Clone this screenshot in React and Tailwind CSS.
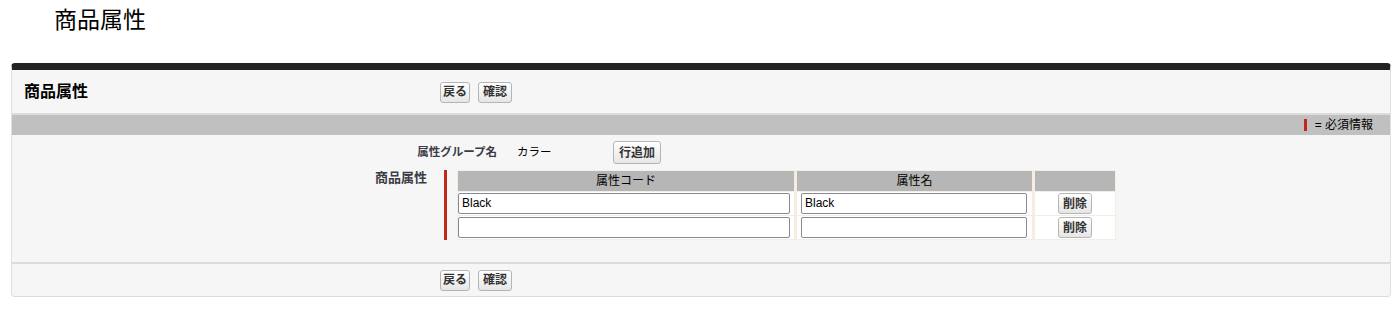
const font = { fontFamily: '"Liberation Sans", Arial, "Noto Sans CJK JP", sans-serif' };

function Btn({ children, h = 'h-[21px]', px = 'px-[3px]' }) {
  return (
    <button className={`${h} ${px} rounded-[3px] border border-[#b5b5b5] bg-gradient-to-b from-white to-[#e6e6e6] text-[12px] font-bold text-[#333] leading-none`}>
      {children}
    </button>
  );
}

function Buttons() {
  return (
    <div className="flex gap-[8px]">
      <Btn px="px-[2px]">戻る</Btn>
      <Btn px="px-[4px]">確認</Btn>
    </div>
  );
}

function Input({ value, w }) {
  return (
    <div className={`h-[21px] ${w} border border-[#8a8794] rounded-[2px] bg-white px-[3px] text-[12px] leading-[19px] text-black`}>
      {value}
    </div>
  );
}

const rows = ['Black', ''];

export default function App() {
  return (
    <div className="bg-white w-[1397px] h-[312px]" style={font}>
      <div className="h-[63px] pl-[54px] pt-[5px] text-[23px] text-black leading-[30px]">商品属性</div>

      <div className="ml-[11px] w-[1380px] bg-[#f6f6f6] rounded-[4px] border-t-[7px] border-t-[#222] border-x border-x-[#e0e0e0] border-b border-b-[#dadada]">
        {/* header */}
        <div className="h-[45px] flex items-center border-b-2 border-[#dcdcdc]">
          <div className="w-[428px] pl-[12px] text-[16px] font-bold text-black">商品属性</div>
          <div className="pt-[1px]"><Buttons /></div>
        </div>

        {/* section bar */}
        <div className="h-[20px] bg-[#c0c0c0] flex items-center justify-end pr-[17px] text-[12px] text-black">
          <span className="w-[3px] h-[12px] bg-[#c0281c] mr-[8px]" />
          <span>= 必須情報</span>
        </div>

        {/* body */}
        <div className="pt-[6px] pb-[22px] border-b-2 border-[#dcdcdc]">
          <div className="flex items-center h-[23px]">
            <div className="w-[485px] text-right text-[11.5px] font-bold text-[#3c3c46]">属性グループ名</div>
            <div className="w-[116px] pl-[20px] text-[11.5px] text-black">カラー</div>
            <Btn h="h-[23px]" px="px-[5px]">行追加</Btn>
          </div>

          <div className="flex mt-[6px]">
            <div className="w-[415px] text-right text-[13px] font-bold text-[#3c3c46] leading-[16px]">商品属性</div>
            <div className="ml-[17px] w-[3px] bg-[#c0281c]" />
            <div className="ml-[10px] grid grid-cols-[336px_235px_80px] gap-x-[3px] gap-y-[1px] bg-[#f5ece2] p-[1px]">
              <div className="h-[20px] bg-[#b6b6b6] text-center text-[12px] leading-[20px] text-black">属性コード</div>
              <div className="h-[20px] bg-[#b6b6b6] text-center text-[12px] leading-[20px] text-black">属性名</div>
              <div className="h-[20px] bg-[#b6b6b6]" />
              {rows.map((v, i) => (
                <div key={i} className="contents">
                  <div className="bg-white h-[23px] flex items-center">
                    <Input value={v} w="w-[332px]" />
                  </div>
                  <div className="bg-white h-[23px] flex items-center pl-[4px]">
                    <Input value={v} w="w-[226px]" />
                  </div>
                  <div className="bg-white h-[23px] flex items-center justify-center">
                    <Btn px="px-[4px]">削除</Btn>
                  </div>
                </div>
              ))}
            </div>
          </div>
        </div>

        {/* footer */}
        <div className="h-[32px] flex items-center">
          <div className="w-[428px]" />
          <Buttons />
        </div>
      </div>
    </div>
  );
}
